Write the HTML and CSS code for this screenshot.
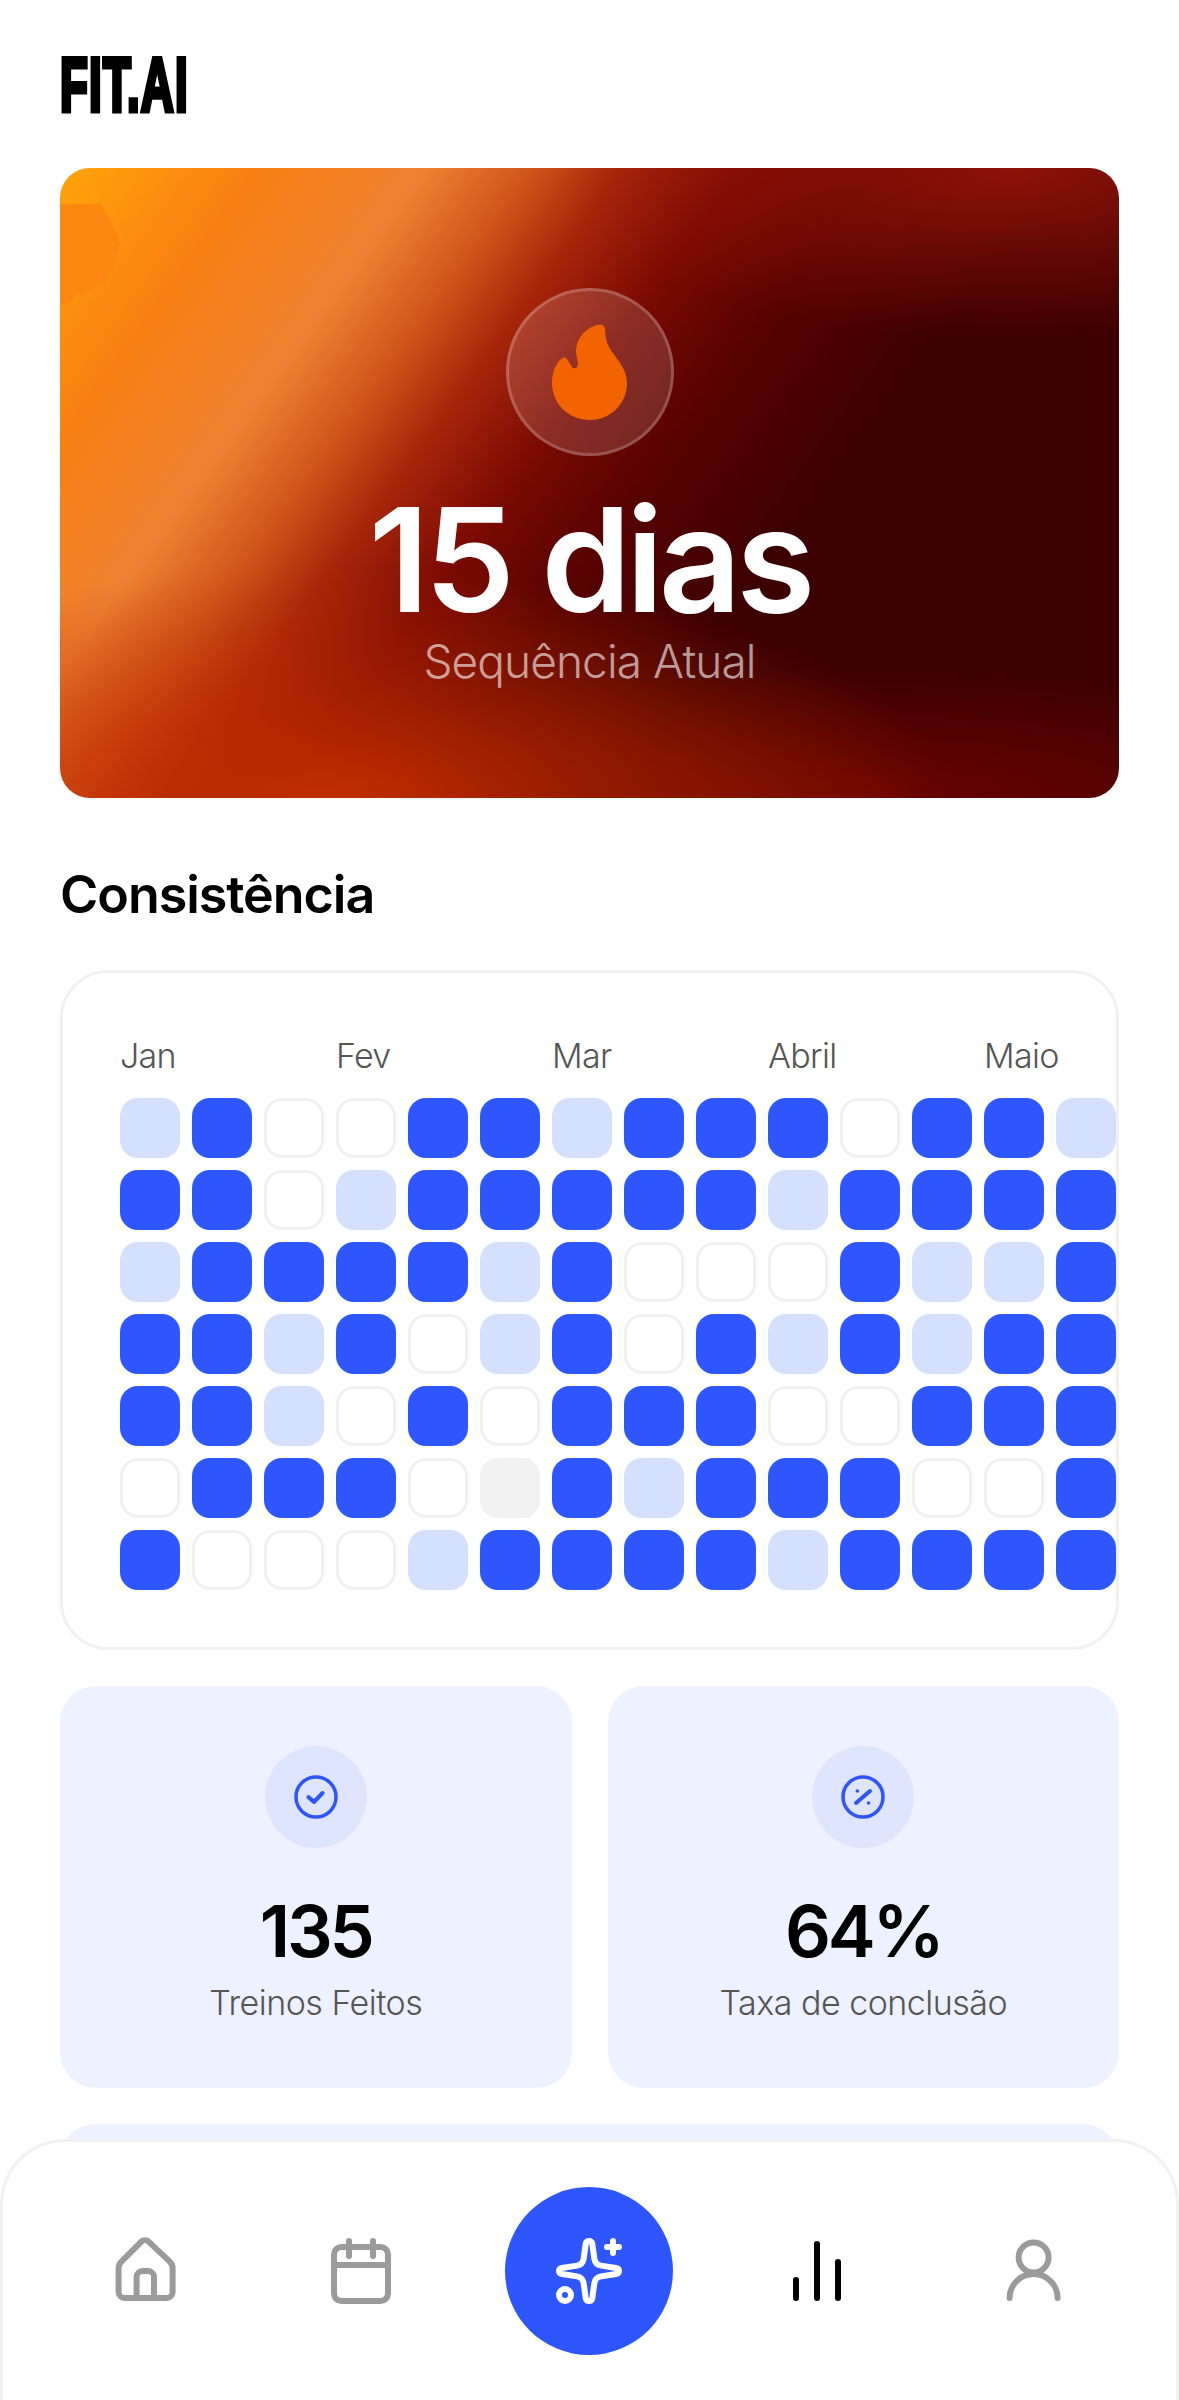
FILE: index.html
```html
<!DOCTYPE html>
<html lang="pt">
<head>
<meta charset="utf-8"/>
<meta content="width=device-width, initial-scale=1.0" name="viewport"/>
<title>FIT.AI</title>
<link rel="stylesheet" href="styles.css">
</head>
<body>
<main class="page">
  <h1 class="logo">FIT.AI</h1>

  <!-- sequência -->
  <section class="hero">
    <div class="hero-badge">
      <svg class="flame" viewBox="0 0 75 96">
        <path d="M53 5C53 1 49 0 45 1C33 4 24 15 24 28C24 32 26 36 26 39C26 44 22 46 20 43C18 40 16 36 14 34C12 33 10 34 8 36C3 41 0 50 0 59C0 80 17 96 38 96C58 96 75 80 75 59C75 44 64 35 57 23C54 17 53 11 53 5Z"></path>
      </svg>
    </div>
    <div class="hero-value">15 dias</div>
    <div class="hero-label">Sequência Atual</div>
  </section>

  <h2 class="section-title">Consistência</h2>

  <!-- calendário -->
  <section class="calendar">
    <div class="months">
      <span>Jan</span>
      <span>Fev</span>
      <span>Mar</span>
      <span>Abril</span>
      <span class="last">Maio</span>
    </div>
    <div class="days">
      <div class="day soft"></div><div class="day on"></div><div class="day"></div><div class="day"></div><div class="day on"></div><div class="day on"></div><div class="day soft"></div><div class="day on"></div><div class="day on"></div><div class="day on"></div><div class="day"></div><div class="day on"></div><div class="day on"></div><div class="day soft"></div>
      <div class="day on"></div><div class="day on"></div><div class="day"></div><div class="day soft"></div><div class="day on"></div><div class="day on"></div><div class="day on"></div><div class="day on"></div><div class="day on"></div><div class="day soft"></div><div class="day on"></div><div class="day on"></div><div class="day on"></div><div class="day on"></div>
      <div class="day soft"></div><div class="day on"></div><div class="day on"></div><div class="day on"></div><div class="day on"></div><div class="day soft"></div><div class="day on"></div><div class="day"></div><div class="day"></div><div class="day"></div><div class="day on"></div><div class="day soft"></div><div class="day soft"></div><div class="day on"></div>
      <div class="day on"></div><div class="day on"></div><div class="day soft"></div><div class="day on"></div><div class="day"></div><div class="day soft"></div><div class="day on"></div><div class="day"></div><div class="day on"></div><div class="day soft"></div><div class="day on"></div><div class="day soft"></div><div class="day on"></div><div class="day on"></div>
      <div class="day on"></div><div class="day on"></div><div class="day soft"></div><div class="day"></div><div class="day on"></div><div class="day"></div><div class="day on"></div><div class="day on"></div><div class="day on"></div><div class="day"></div><div class="day"></div><div class="day on"></div><div class="day on"></div><div class="day on"></div>
      <div class="day"></div><div class="day on"></div><div class="day on"></div><div class="day on"></div><div class="day"></div><div class="day today"></div><div class="day on"></div><div class="day soft"></div><div class="day on"></div><div class="day on"></div><div class="day on"></div><div class="day"></div><div class="day"></div><div class="day on"></div>
      <div class="day on"></div><div class="day"></div><div class="day"></div><div class="day"></div><div class="day soft"></div><div class="day on"></div><div class="day on"></div><div class="day on"></div><div class="day on"></div><div class="day soft"></div><div class="day on"></div><div class="day on"></div><div class="day on"></div><div class="day on"></div>
    </div>
  </section>

  <!-- números -->
  <section class="stats">
    <div class="stat">
      <div class="stat-icon">
        <svg viewBox="0 0 24 24">
          <circle cx="12" cy="12" r="10"></circle>
          <path class="mark" d="M8.2 12L11 14.5L15.3 10"></path>
        </svg>
      </div>
      <div class="stat-value">135</div>
      <div class="stat-label">Treinos Feitos</div>
    </div>
    <div class="stat">
      <div class="stat-icon">
        <svg viewBox="0 0 24 24">
          <circle cx="12" cy="12" r="10"></circle>
          <path class="mark" d="M8.5 15L15.5 9"></path>
          <circle class="dot" cx="9.2" cy="9" r="0.5"></circle>
          <circle class="dot" cx="14.8" cy="15" r="0.5"></circle>
        </svg>
      </div>
      <div class="stat-value">64%</div>
      <div class="stat-label">Taxa de conclusão</div>
    </div>
  </section>

  <div class="stat-wide"></div>
</main>

<!-- barra de navegação -->
<nav class="bottom-nav">
  <div class="nav-group">
    <svg class="nav-icon" viewBox="0 0 24 24">
      <path d="M10.8 2.2a1.8 1.8 0 0 1 2.4 0L20.2 8.8a3 3 0 0 1 1 2.2V19a2 2 0 0 1-2 2H5.2a2 2 0 0 1-2-2V11a3 3 0 0 1 1-2.2Z"></path>
      <path d="M9.2 21V14a2 2 0 0 1 2-2h1.8a2 2 0 0 1 2 2V21"></path>
    </svg>
    <svg class="nav-icon" viewBox="0 0 24 24">
      <rect x="3" y="4" width="18" height="18" rx="2.5"></rect>
      <path d="M3 10H21M8 2V7M16 2V7"></path>
    </svg>
  </div>
  <div class="nav-main">
    <svg class="nav-icon" viewBox="0 0 24 24">
      <path d="M12 2C12.6 2 13 2.4 13.1 3L13.8 8C14 9.2 14.8 10 16 10.2L21 11C21.6 11.1 22 11.4 22 12C22 12.6 21.6 12.9 21 13L16 13.8C14.8 14 14 14.8 13.8 16L13.1 21C13 21.6 12.6 22 12 22C11.4 22 11 21.6 10.9 21L10.2 16C10 14.8 9.2 14 8 13.8L3 13C2.4 12.9 2 12.6 2 12C2 11.4 2.4 11.1 3 11L8 10.2C9.2 10 10 9.2 10.2 8L10.9 3C11 2.4 11.4 2 12 2Z"></path>
      <circle cx="4" cy="20" r="2"></circle>
      <path d="M20 2V6M18 4H22"></path>
    </svg>
  </div>
  <div class="nav-group">
    <svg class="nav-icon active" viewBox="0 0 24 24">
      <path d="M5 15V21M12 3V21M19 9V21"></path>
    </svg>
    <svg class="nav-icon" viewBox="0 0 24 24">
      <circle cx="12.2" cy="7.5" r="5"></circle>
      <path d="M4.2 21a8 8 0 0 1 16 0"></path>
    </svg>
  </div>
</nav>
</body>
</html>
```

FILE: styles.css
```css
body {
  margin: 0;
  height: 2400px;
  overflow: hidden;
  position: relative;
  background-color: #fff;
  font-family: Inter, "Liberation Sans", sans-serif;
  color: #000;
}

.page {
  padding: 0 60px;
}

.logo {
  margin: 0 0 44px;
  padding-top: 46px;
  font-family: "Liberation Sans", sans-serif;
  font-size: 76px;
  line-height: 78px;
  font-weight: 700;
  letter-spacing: 2px;
  -webkit-text-stroke: 5px #000;
  transform: scaleX(0.6);
  transform-origin: left top;
  white-space: nowrap;
}

/* cartão de sequência */
.hero {
  position: relative;
  overflow: hidden;
  height: 630px;
  padding-top: 120px;
  box-sizing: border-box;
  border-radius: 30px;
  display: flex;
  flex-direction: column;
  align-items: center;
  color: #fff;
  background:
    radial-gradient(ellipse 460px 170px at 90% 0%, rgba(150, 20, 8, 0.9), rgba(150, 20, 8, 0)),
    radial-gradient(ellipse 620px 230px at 25% 100%, #c22e00, rgba(194, 46, 0, 0)),
    radial-gradient(ellipse 620px 130px at 75% 100%, #6a0300, rgba(106, 3, 0, 0)),
    linear-gradient(126deg, #ffa40a 0%, #f97f12 13%, #ef8232 24%, #d0561a 31%, #a8260a 37%, #7a0a02 45%, #560200 54%, #3c0000 66%, #3c0000 100%);
}

.hero::before {
  content: "";
  position: absolute;
  left: 0;
  top: 36px;
  width: 60px;
  height: 100px;
  background-color: #fb8710;
  clip-path: polygon(0 0, 68% 0, 85% 18%, 100% 40%, 92% 58%, 72% 82%, 30% 90%, 14% 100%, 0 100%);
}

.hero-badge {
  width: 168px;
  height: 168px;
  box-sizing: border-box;
  border: 3px solid rgba(255, 255, 255, 0.2);
  border-radius: 50%;
  background-color: rgba(255, 255, 255, 0.14);
  display: flex;
  justify-content: center;
  align-items: center;
  position: relative;
}

.flame {
  width: 75px;
  height: 96px;
  fill: #f36400;
}

.hero-value {
  margin-top: 32px;
  font-size: 144px;
  line-height: 1;
  font-weight: 600;
  letter-spacing: -0.035em;
  position: relative;
}

.hero-label {
  margin-top: 3px;
  font-size: 46px;
  line-height: 53px;
  font-weight: 300;
  letter-spacing: -0.02em;
  color: rgba(255, 255, 255, 0.6);
  position: relative;
}

.section-title {
  margin: 0;
  height: 172px;
  box-sizing: border-box;
  padding-top: 20px;
  display: flex;
  align-items: center;
  font-size: 52px;
  font-weight: 600;
  letter-spacing: -0.02em;
}

/* calendário */
.calendar {
  box-sizing: border-box;
  height: 680px;
  padding: 57px 0 0 57px;
  border: 3px solid #f1f1f1;
  border-radius: 48px;
}

.months,
.days {
  display: grid;
  grid-template-columns: repeat(14, 60px);
  column-gap: 12px;
}

.months {
  margin-bottom: 16px;
  font-size: 34px;
  line-height: 52px;
  font-weight: 300;
  letter-spacing: -0.02em;
  color: #555;
}

.months span {
  grid-column: span 3;
}

.months .last {
  grid-column: span 2;
}

.days {
  grid-auto-rows: 60px;
  row-gap: 12px;
}

.day {
  box-sizing: border-box;
  border: 3px solid #f1f1f1;
  border-radius: 18px;
  background-color: #fff;
}

.day.on {
  border: none;
  background-color: #2d56ff;
}

.day.soft {
  border: none;
  background-color: #d5dffe;
}

.day.today {
  background-color: #f1f1f1;
}

/* números */
.stats {
  margin-top: 36px;
  display: grid;
  grid-template-columns: 1fr 1fr;
  gap: 36px;
}

.stat {
  box-sizing: border-box;
  height: 402px;
  padding-top: 60px;
  border-radius: 36px;
  background-color: #eef1ff;
  display: flex;
  flex-direction: column;
  align-items: center;
}

.stat-icon {
  width: 102px;
  height: 102px;
  border-radius: 50%;
  background-color: #dfe5ff;
  display: flex;
  justify-content: center;
  align-items: center;
}

.stat-icon svg {
  width: 48px;
  height: 48px;
  fill: none;
  stroke: #2d56ff;
  stroke-width: 1.75;
}

.stat-icon .mark {
  stroke-width: 2;
  stroke-linecap: round;
  stroke-linejoin: round;
}

.stat-icon .dot {
  fill: #2d56ff;
  stroke-width: 0.8;
}

.stat-value {
  margin-top: 47px;
  font-size: 72px;
  line-height: 1;
  font-weight: 600;
  letter-spacing: -0.045em;
}

.stat-label {
  margin-top: 15px;
  font-size: 34px;
  line-height: 41px;
  font-weight: 300;
  letter-spacing: -0.015em;
  color: #555;
}

.stat-wide {
  margin-top: 36px;
  height: 200px;
  border-radius: 36px;
  background-color: #eef1ff;
}

/* barra de navegação */
.bottom-nav {
  position: absolute;
  left: 0;
  right: 0;
  bottom: 0;
  height: 261px;
  box-sizing: border-box;
  padding: 45px 107px 0 106px;
  border: 3px solid #f1f1f1;
  border-bottom: none;
  border-radius: 65px 65px 0 0;
  background-color: #fff;
  display: flex;
  justify-content: space-between;
  align-items: flex-start;
}

.nav-group {
  display: flex;
  gap: 144px;
  margin-top: 48px;
}

.nav-icon {
  width: 72px;
  height: 72px;
  fill: none;
  stroke: #9b9b9b;
  stroke-width: 2;
  stroke-linecap: round;
  stroke-linejoin: round;
}

.nav-icon.active {
  stroke: #000;
}

.nav-main {
  width: 168px;
  height: 168px;
  border-radius: 50%;
  background-color: #2d56ff;
  display: flex;
  justify-content: center;
  align-items: center;
}

.nav-main .nav-icon {
  stroke: #fff;
}
```
